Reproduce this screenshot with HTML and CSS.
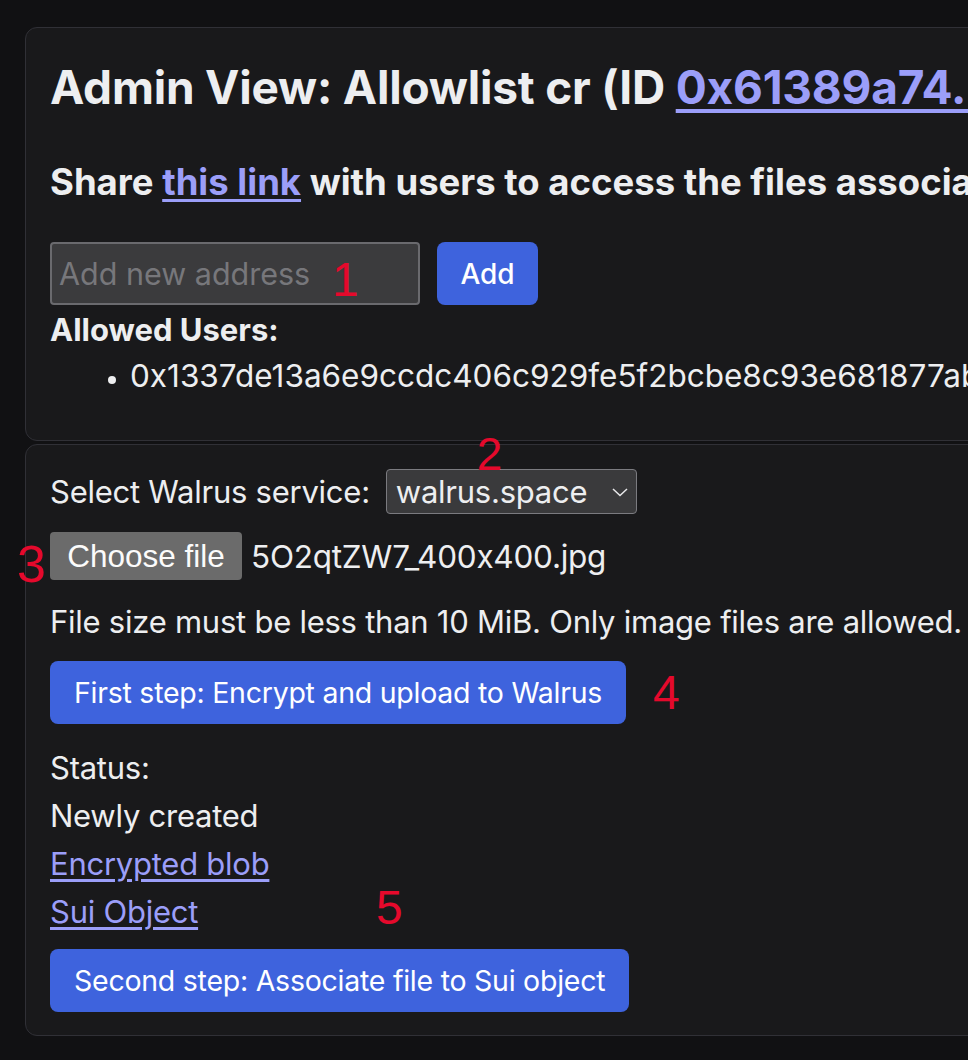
FILE: index.html
```html
<!DOCTYPE html>
<html>
<head>
<meta charset="utf-8">
<link rel="stylesheet" href="styles.css">
</head>
<body>
<div class="page">
  <section class="card card-admin">
    <h2 class="title">Admin View: Allowlist cr (ID <a href="#">0x61389a74...6f0b2c1e</a>)</h2>
    <h3 class="share">Share <a href="#">this link</a> with users to access the files associated with this allowlist.</h3>
    <div class="add-row">
      <div class="input-wrap">
        <input class="addr-input" type="text" placeholder="Add new address">
        <span class="note note-1">1</span>
      </div>
      <button class="btn btn-add">Add</button>
    </div>
    <h4 class="allowed">Allowed Users:</h4>
    <ul class="users">
      <li>0x1337de13a6e9ccdc406c929fe5f2bcbe8c93e681877ab5e0d3c1</li>
    </ul>
  </section>
  <section class="card card-upload">
    <div class="row select-row">
      <span>Select Walrus service:</span>
      <div class="select">
        <span>walrus.space</span>
        <svg class="chev" width="18" height="10" viewBox="0 0 18 10"><path d="M2 2l7 6.5 7-6.5" fill="none" stroke="#e8e8ea" stroke-width="1.5"/></svg>
        <span class="note note-2">2</span>
      </div>
    </div>
    <div class="row file-row">
      <span class="note note-3">3</span>
      <span class="file-btn">Choose file</span>
      <span class="file-name">5O2qtZW7_400x400.jpg</span>
    </div>
    <p class="line hint">File size must be less than 10 MiB. Only image files are allowed.</p>
    <div class="row step-row">
      <button class="btn btn-step">First step: Encrypt and upload to Walrus</button>
      <span class="note note-4">4</span>
    </div>
    <div class="status">
      <p class="line">Status:</p>
      <p class="line">Newly created</p>
      <p class="line"><a href="#">Encrypted blob</a></p>
      <p class="line sui-line"><a href="#">Sui Object</a><span class="note note-5">5</span></p>
    </div>
    <button class="btn btn-step btn-second">Second step: Associate file to Sui object</button>
  </section>
</div>
</body>
</html>
```
FILE: styles.css
```css
html, body {
  margin: 0;
  padding: 0;
  background: #111113;
  overflow: hidden;
}
body {
  width: 968px;
  height: 1060px;
  font-family: Inter, "Noto Sans", sans-serif;
  color: #edeef0;
}
a {
  color: #9b9ef9;
  text-decoration: underline;
  text-underline-offset: 4px;
}
.page {
  padding: 27px 0 0 25px;
  width: 1200px;
  display: flex;
  flex-direction: column;
  gap: 3px;
}
.card {
  background: #19191b;
  border: 1px solid #303036;
  border-radius: 12px;
  padding: 0 24px;
}
.card-admin {
  height: 414px;
  box-sizing: border-box;
}
.title {
  margin: 31px 0 0;
  font-size: 46px;
  font-weight: 700;
  line-height: 56px;
  white-space: nowrap;
  letter-spacing: -0.2px;
}
.title a { text-decoration-thickness: 4px; text-underline-offset: 5px; }
.share {
  margin: 45px 0 0;
  font-size: 36.5px;
  font-weight: 700;
  line-height: 44px;
  white-space: nowrap;
}
.share a { text-decoration-thickness: 3px; }
.add-row {
  display: flex;
  gap: 17px;
  margin-top: 38px;
}
.input-wrap {
  position: relative;
}
.addr-input {
  display: block;
  box-sizing: border-box;
  width: 370px;
  height: 63px;
  background: #3b3b3d;
  border: 2px solid #6a6a6e;
  border-radius: 4px;
  padding: 0 7px;
  font-family: Inter, sans-serif;
  font-size: 30.5px;
  color: #eee;
  outline: none;
}
.addr-input::placeholder { color: #77777b; }
.btn {
  font-family: Inter, sans-serif;
  background: #3e63dd;
  color: #ffffff;
  border: none;
  border-radius: 8px;
  cursor: pointer;
}
.btn-add {
  width: 101px;
  height: 63px;
  font-size: 28px;
  font-weight: 500;
}
.note {
  position: absolute;
  color: #e5092c;
  font-family: "Liberation Sans", Arial, sans-serif;
  font-size: 48px;
  line-height: 1;
  font-weight: 400;
}
.note-1 { left: 282px; top: 14px; }
.allowed {
  margin: 4px 0 0;
  font-size: 31px;
  font-weight: 700;
  line-height: 42px;
}
.users {
  margin: 4px 0 0;
  padding-left: 80px;
  font-size: 31.5px;
  line-height: 42px;
  white-space: nowrap;
}
.users li::marker { font-size: 24px; }
.card-upload {
  height: 592px;
  box-sizing: border-box;
  padding-top: 24px;
  font-size: 31px;
  letter-spacing: -0.25px;
}
.row {
  display: flex;
  align-items: center;
  position: relative;
}
.select-row {
  gap: 16px;
}
.select {
  position: relative;
  box-sizing: border-box;
  width: 251px;
  height: 45px;
  background: #3a3a3c;
  border: 1.5px solid #7b7b80;
  border-radius: 4px;
  display: flex;
  align-items: center;
  justify-content: space-between;
  padding: 0 7px 0 9px;
  font-size: 31px;
}
.chev { margin-top: 1px; }
.note-2 { left: 90px; top: -39px; font-size: 46px; }
.file-row {
  margin-top: 18px;
  gap: 9px;
}
.file-btn {
  background: #6b6b6b;
  color: #fbfbfb;
  border-radius: 4px;
  height: 48px;
  width: 192px;
  display: flex;
  align-items: center;
  justify-content: center;
  font-family: "Liberation Sans", Arial, sans-serif;
  font-size: 31.5px;
  letter-spacing: 0;
}
.file-name { font-size: 31.5px; }
.note-3 { left: -33px; top: 6px; font-size: 52px; }
.line {
  margin: 0;
  line-height: 48px;
}
.hint { margin-top: 18px; }
.step-row { margin-top: 15px; }
.btn-step {
  height: 63px;
  padding: 0 24px;
  font-size: 28.5px;
  font-weight: 400;
  letter-spacing: -0.25px;
}
.note-4 { left: 603px; top: 8px; font-size: 48px; }
.status { margin-top: 20px; }
.sui-line { position: relative; }
.note-5 { left: 326px; top: -4px; font-size: 48px; }
.btn-second { margin-top: 13px; }
```
